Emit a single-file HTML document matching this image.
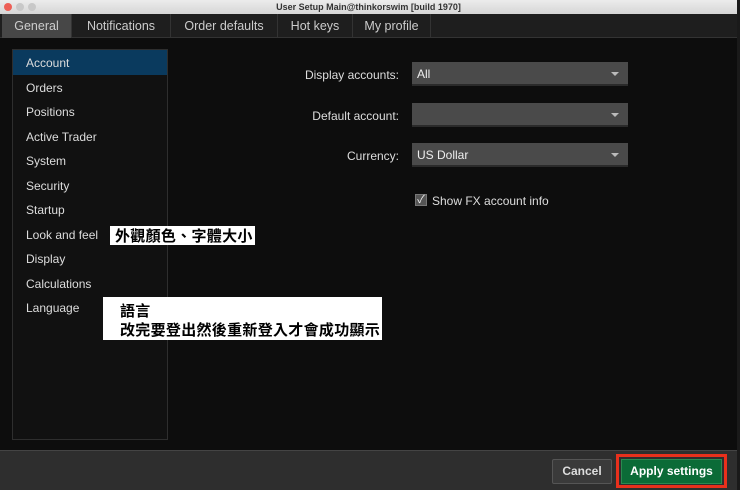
<!DOCTYPE html>
<html><head><meta charset="utf-8"><style>
*{margin:0;padding:0;box-sizing:border-box}
body{width:740px;height:490px;background:#0d0d0d;font-family:"Liberation Sans","Noto Sans CJK TC",sans-serif;position:relative;overflow:hidden;color:#ddd}
.abs{position:absolute}
.title{left:0;top:0;width:737px;height:14px;background:linear-gradient(#ececec,#d6d6d6);font-size:9px;font-weight:bold;color:#333;text-align:center;line-height:14px}
.dot{top:3px;width:8px;height:8px;border-radius:50%;background:#c8c8c8}
.tabs{left:0;top:14px;width:737px;height:24px;background:#1e1e1e;border-bottom:1px solid #333}
.tab{position:absolute;top:0;height:24px;line-height:24px;font-size:12.5px;color:#ccc;text-align:center;border-right:1px solid #333}
.panel{left:12px;top:49px;width:156px;height:391px;border:1px solid #2e2e2e;background:#111}
.item{position:absolute;left:13px;font-size:12px;color:#ddd}
.lbl{font-size:12px;color:#ddd;text-align:right;width:120px}
.dd{left:412px;width:216px;height:24px;background:#4a4a4a;border-bottom:2px solid #2a2a2a;font-size:12px;line-height:25px;padding-left:5px;color:#eee}
.dd:after{content:"";position:absolute;right:9px;top:10px;border-left:4px solid transparent;border-right:4px solid transparent;border-top:4px solid #bbb}
.note{background:#fff;color:#000;font-weight:bold;font-size:15px;font-family:"Noto Sans CJK TC",sans-serif;letter-spacing:0.3px}
</style></head><body>
<div class="abs title">User Setup Main@thinkorswim [build 1970]</div>
<div class="abs dot" style="left:4px;background:#ed5f56"></div>
<div class="abs dot" style="left:16px"></div>
<div class="abs dot" style="left:28px"></div>
<div class="abs tabs">
<div class="tab" style="left:2px;width:70px;background:#474747">General</div>
<div class="tab" style="left:72px;width:99px">Notifications</div>
<div class="tab" style="left:171px;width:107px">Order defaults</div>
<div class="tab" style="left:278px;width:75px">Hot keys</div>
<div class="tab" style="left:353px;width:78px">My profile</div>
</div>
<div class="abs" style="left:737px;top:0;width:3px;height:490px;background:#1a1a1a"></div>
<div class="abs panel">
<div class="abs" style="left:0;top:0;width:154px;height:25px;background:#0a3a5e"></div>
<div class="item" style="top:6px">Account</div>
<div class="item" style="top:31px">Orders</div>
<div class="item" style="top:55px">Positions</div>
<div class="item" style="top:80px">Active Trader</div>
<div class="item" style="top:104px">System</div>
<div class="item" style="top:129px">Security</div>
<div class="item" style="top:153px">Startup</div>
<div class="item" style="top:178px">Look and feel</div>
<div class="item" style="top:202px">Display</div>
<div class="item" style="top:227px">Calculations</div>
<div class="item" style="top:251px">Language</div>
</div>
<div class="abs lbl" style="left:279px;top:68px">Display accounts:</div>
<div class="abs lbl" style="left:279px;top:109px">Default account:</div>
<div class="abs lbl" style="left:279px;top:149px">Currency:</div>
<div class="abs dd" style="top:62px">All</div>
<div class="abs dd" style="top:103px"></div>
<div class="abs dd" style="top:143px">US Dollar</div>
<div class="abs" style="left:415px;top:194px;width:12px;height:12px;background:#555;border:1px solid #777;color:#eee;font-size:11px;line-height:10px;text-align:center">✓</div>
<div class="abs" style="left:432px;top:194px;font-size:12px;color:#ddd">Show FX account info</div>
<div class="abs note" style="left:110px;top:226px;width:145px;height:19px;line-height:19px;padding-left:5px">外觀顏色、字體大小</div>
<div class="abs note" style="left:103px;top:297px;width:279px;height:43px;padding:4px 0 0 17px;line-height:19px">語言<br>改完要登出然後重新登入才會成功顯示</div>
<div class="abs" style="left:0;top:450px;width:737px;height:40px;background:#2e2e2e;border-top:1px solid #444"></div>
<div class="abs" style="left:552px;top:459px;width:60px;height:25px;background:#3a3a3a;border:1px solid #555;border-radius:2px;color:#ddd;font-weight:bold;font-size:12px;text-align:center;line-height:23px">Cancel</div>
<div class="abs" style="left:616px;top:454px;width:111px;height:34px;border:3px solid #e8301c"></div>
<div class="abs" style="left:621px;top:459px;width:101px;height:25px;background:#0b6b37;border:1px solid #2a8a50;color:#fff;font-weight:bold;font-size:12px;text-align:center;line-height:23px">Apply settings</div>
</body></html>
